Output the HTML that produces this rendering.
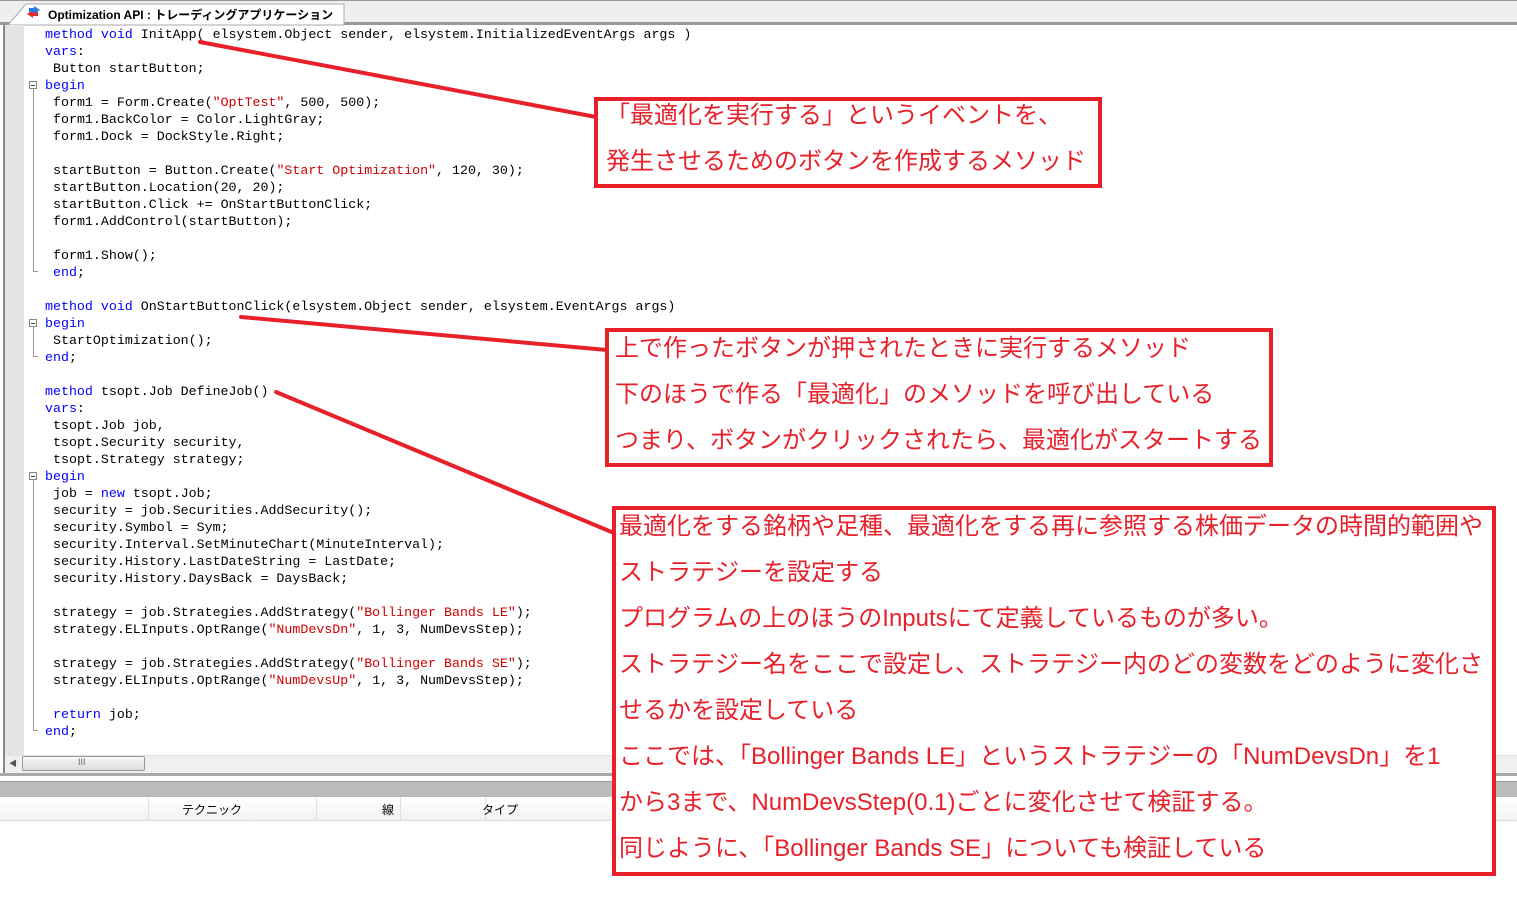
<!DOCTYPE html>
<html><head><meta charset="utf-8">
<style>
html,body{margin:0;padding:0;width:1517px;height:897px;overflow:hidden;background:#fff;position:relative;font-family:"Liberation Sans","Noto Sans CJK JP",sans-serif}
.code{position:absolute;left:0;top:0;font-family:"Liberation Mono",monospace;font-size:13.3px;color:#000;white-space:pre}
.code div{position:absolute;height:17px;line-height:17px}
.k{color:#0000ff}.s{color:#d00000}
.box{position:absolute;border:4px solid #e8202a;background:#fff;color:#e8202a;font-family:"Liberation Sans","Noto Sans CJK JP",sans-serif;font-size:24px;box-sizing:border-box;white-space:nowrap}
.box div{position:absolute;left:6px;height:30px;line-height:30px}
.fold{position:absolute;left:29px;width:8px;height:8px;border:1px solid #888;background:#fff;box-sizing:border-box}
.fold:after{content:"";position:absolute;left:1px;top:3px;width:4px;height:1px;background:#444}
.vl{position:absolute;left:33px;width:1px;background:#999}
.hl{position:absolute;left:33px;width:5px;height:1px;background:#999}
</style></head><body>
<div style="position:absolute;left:0;top:0;width:1517px;height:24px;background:#efefef;border-top:1px solid #999;box-sizing:border-box"></div>
<div style="position:absolute;left:0;top:22px;width:1517px;height:3px;background:#999"></div>
<svg style="position:absolute;left:0;top:0" width="350" height="26"><path d="M8 25 L26 4 L344 4 L344 25 Z" fill="#fff" stroke="#aaa"/><path d="M27 14 l6 -4 v2 h5 v4 h-5 v2 z" fill="#e52b2b"/><path d="M40 10 l-6 -4 v2 h-5 v4 h5 v2 z" fill="#2b7be5"/></svg>
<div style="position:absolute;left:48px;top:6px;font-size:12px;font-weight:bold;color:#000;white-space:nowrap;font-family:'Liberation Sans','Noto Sans CJK JP',sans-serif">Optimization API : トレーディングアプリケーション</div>
<div style="position:absolute;left:3px;top:25px;width:2px;height:750px;background:#888"></div>
<div style="position:absolute;left:5px;top:25px;width:19px;height:730px;background:#e4e4e4"></div>
<div class="fold" style="top:81px"></div><div class="vl" style="top:89px;height:182px"></div><div class="hl" style="top:271px"></div>
<div class="fold" style="top:319px"></div><div class="vl" style="top:327px;height:29px"></div><div class="hl" style="top:356px"></div>
<div class="fold" style="top:472px"></div><div class="vl" style="top:480px;height:250px"></div><div class="hl" style="top:730px"></div>
<div class="code">
<div style="left:45px;top:26px"><span class="k">method void</span> InitApp( elsystem.Object sender, elsystem.InitializedEventArgs args )</div>
<div style="left:45px;top:43px"><span class="k">vars</span>:</div>
<div style="left:53px;top:60px">Button startButton;</div>
<div style="left:45px;top:77px"><span class="k">begin</span></div>
<div style="left:53px;top:94px">form1 = Form.Create(<span class="s">"OptTest"</span>, 500, 500);</div>
<div style="left:53px;top:111px">form1.BackColor = Color.LightGray;</div>
<div style="left:53px;top:128px">form1.Dock = DockStyle.Right;</div>
<div style="left:53px;top:162px">startButton = Button.Create(<span class="s">"Start Optimization"</span>, 120, 30);</div>
<div style="left:53px;top:179px">startButton.Location(20, 20);</div>
<div style="left:53px;top:196px">startButton.Click += OnStartButtonClick;</div>
<div style="left:53px;top:213px">form1.AddControl(startButton);</div>
<div style="left:53px;top:247px">form1.Show();</div>
<div style="left:53px;top:264px"><span class="k">end</span>;</div>
<div style="left:45px;top:298px"><span class="k">method void</span> OnStartButtonClick(elsystem.Object sender, elsystem.EventArgs args)</div>
<div style="left:45px;top:315px"><span class="k">begin</span></div>
<div style="left:53px;top:332px">StartOptimization();</div>
<div style="left:45px;top:349px"><span class="k">end</span>;</div>
<div style="left:45px;top:383px"><span class="k">method</span> tsopt.Job DefineJob()</div>
<div style="left:45px;top:400px"><span class="k">vars</span>:</div>
<div style="left:53px;top:417px">tsopt.Job job,</div>
<div style="left:53px;top:434px">tsopt.Security security,</div>
<div style="left:53px;top:451px">tsopt.Strategy strategy;</div>
<div style="left:45px;top:468px"><span class="k">begin</span></div>
<div style="left:53px;top:485px">job = <span class="k">new</span> tsopt.Job;</div>
<div style="left:53px;top:502px">security = job.Securities.AddSecurity();</div>
<div style="left:53px;top:519px">security.Symbol = Sym;</div>
<div style="left:53px;top:536px">security.Interval.SetMinuteChart(MinuteInterval);</div>
<div style="left:53px;top:553px">security.History.LastDateString = LastDate;</div>
<div style="left:53px;top:570px">security.History.DaysBack = DaysBack;</div>
<div style="left:53px;top:604px">strategy = job.Strategies.AddStrategy(<span class="s">"Bollinger Bands LE"</span>);</div>
<div style="left:53px;top:621px">strategy.ELInputs.OptRange(<span class="s">"NumDevsDn"</span>, 1, 3, NumDevsStep);</div>
<div style="left:53px;top:655px">strategy = job.Strategies.AddStrategy(<span class="s">"Bollinger Bands SE"</span>);</div>
<div style="left:53px;top:672px">strategy.ELInputs.OptRange(<span class="s">"NumDevsUp"</span>, 1, 3, NumDevsStep);</div>
<div style="left:53px;top:706px"><span class="k">return</span> job;</div>
<div style="left:45px;top:723px"><span class="k">end</span>;</div>
</div>
<div style="position:absolute;left:5px;top:755px;width:1512px;height:17px;background:#f0f0f0;border-top:1px solid #e0e0e0"></div>
<div style="position:absolute;left:9px;top:758px;font-size:8px;color:#555">◀</div>
<div style="position:absolute;left:22px;top:756px;width:121px;height:13px;background:linear-gradient(#f8f8f8,#dcdcdc);border:1px solid #999;border-radius:2px"></div>
<div style="position:absolute;left:78px;top:757px;font-size:9px;color:#666">III</div>
<div style="position:absolute;left:0;top:773px;width:1517px;height:3px;background:#aaa"></div>
<div style="position:absolute;left:0;top:776px;width:1517px;height:5px;background:#fff"></div>
<div style="position:absolute;left:0;top:781px;width:1517px;height:16px;background:#bcbcbc;border-top:1px solid #999"></div>
<div style="position:absolute;left:0;top:797px;width:1517px;height:23px;background:linear-gradient(#fff,#f3f3f3);border-bottom:1px solid #ddd"></div>
<div style="position:absolute;left:148px;top:797px;width:1px;height:23px;background:#e0e0e0"></div>
<div style="position:absolute;left:316px;top:797px;width:1px;height:23px;background:#e0e0e0"></div>
<div style="position:absolute;left:400px;top:797px;width:1px;height:23px;background:#e0e0e0"></div>
<div style="position:absolute;left:485px;top:797px;width:1px;height:23px;background:#e0e0e0"></div>
<div style="position:absolute;left:182px;top:801px;font-size:12px">テクニック</div>
<div style="position:absolute;left:382px;top:801px;font-size:12px">線</div>
<div style="position:absolute;left:482px;top:801px;font-size:12px">タイプ</div>
<svg style="position:absolute;left:0;top:0" width="1517" height="897"><g stroke="#e8202a" stroke-width="4" stroke-linecap="round"><line x1="200" y1="42" x2="596" y2="117"/><line x1="241" y1="317" x2="607" y2="350"/><line x1="276" y1="392" x2="614" y2="533"/></g></svg>
<div class="box" style="left:594px;top:97px;width:508px;height:91px"><div style="top:0px;left:8px">「最適化を実行する」というイベントを、</div><div style="top:46px;left:8px">発生させるためのボタンを作成するメソッド</div></div>
<div class="box" style="left:605px;top:328px;width:668px;height:139px"><div style="top:2px">上で作ったボタンが押されたときに実行するメソッド</div><div style="top:48px">下のほうで作る「最適化」のメソッドを呼び出している</div><div style="top:94px">つまり、ボタンがクリックされたら、最適化がスタートする</div></div>
<div class="box" style="left:612px;top:506px;width:884px;height:370px"><div style="top:2px;left:3px">最適化をする銘柄や足種、最適化をする再に参照する株価データの時間的範囲や</div><div style="top:48px;left:3px">ストラテジーを設定する</div><div style="top:94px;left:3px">プログラムの上のほうのInputsにて定義しているものが多い。</div><div style="top:140px;left:3px">ストラテジー名をここで設定し、ストラテジー内のどの変数をどのように変化さ</div><div style="top:186px;left:3px">せるかを設定している</div><div style="top:232px;left:3px">ここでは、「Bollinger Bands LE」というストラテジーの「NumDevsDn」を1</div><div style="top:278px;left:3px">から3まで、NumDevsStep(0.1)ごとに変化させて検証する。</div><div style="top:324px;left:3px">同じように、「Bollinger Bands SE」についても検証している</div></div>
</body></html>
